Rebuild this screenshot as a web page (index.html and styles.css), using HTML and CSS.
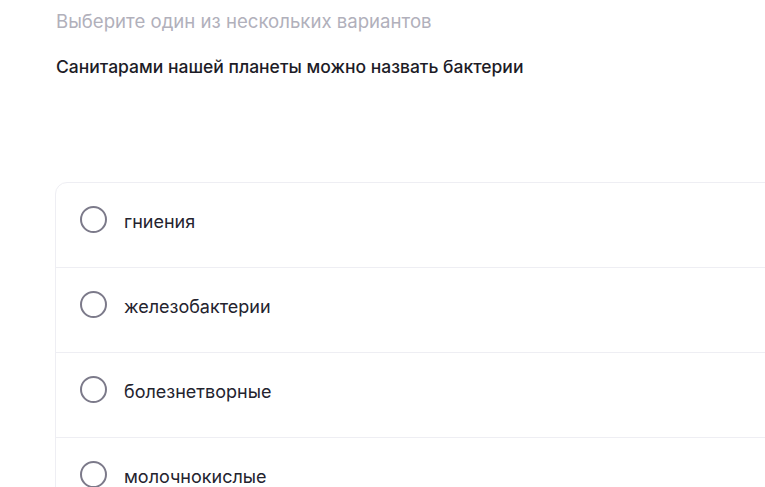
FILE: index.html
```html
<!DOCTYPE html>
<html lang="ru">
<head>
    <meta charset="UTF-8">
    <meta name="viewport" content="width=device-width, initial-scale=1.0">
    <title>Вопрос</title>
    <link rel="stylesheet" href="styles.css">
</head>
<body>
    <div class="question">
        <div class="hint">Выберите один из нескольких вариантов</div>
        <div class="question-text">Санитарами нашей планеты можно назвать бактерии</div>

        <div class="options">
            <label class="option">
                <span class="radio"></span>
                <span class="option-text">гниения</span>
            </label>
            <label class="option">
                <span class="radio"></span>
                <span class="option-text">железобактерии</span>
            </label>
            <label class="option">
                <span class="radio"></span>
                <span class="option-text">болезнетворные</span>
            </label>
            <label class="option">
                <span class="radio"></span>
                <span class="option-text">молочнокислые</span>
            </label>
        </div>
    </div>
</body>
</html>
```

FILE: styles.css
```css
body {
    font-family: Inter, 'Noto Sans', sans-serif;
    margin: 0;
    padding: 0;
    background-color: #ffffff;
    overflow: hidden;
}

.question {
    padding: 8px 0 0 56px;
}

.hint {
    color: #b1b0bb;
    font-size: 18.6px;
    line-height: 26px;
}

.question-text {
    color: #1d1c27;
    font-size: 17.5px;
    font-weight: 500;
    line-height: 26px;
    margin-top: 20px;
}

.options {
    margin: 102px 0 0 -1px;
    width: 800px;
    border: 1px solid #eeeef3;
    border-radius: 12px;
}

.option {
    display: flex;
    align-items: center;
    gap: 17px;
    padding: 22px 24px 31px;
    border-bottom: 1px solid #eeeef3;
    cursor: pointer;
}

.radio {
    width: 23px;
    height: 23px;
    border: 2.5px solid #7c7a8a;
    border-radius: 50%;
    flex-shrink: 0;
    margin-bottom: 3px;
}

.option-text {
    color: #24232e;
    font-size: 18px;
    line-height: 28px;
    margin-top: 3px;
}
```
